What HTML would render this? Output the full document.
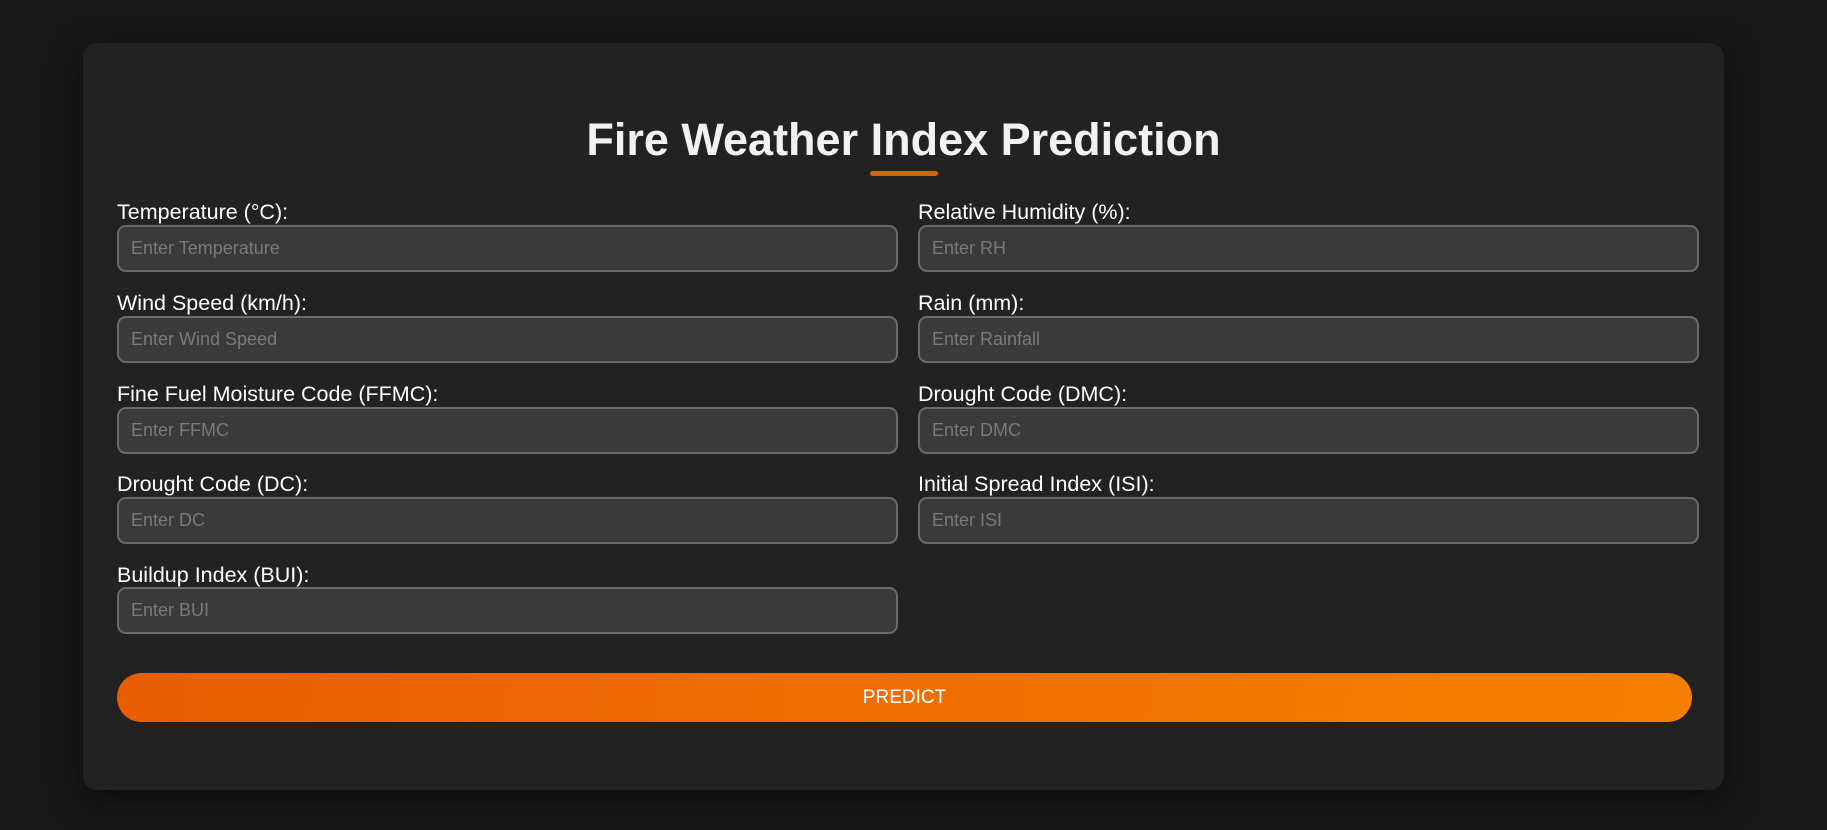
<!DOCTYPE html>
<html><head><meta charset="utf-8"><style>
body{margin:0;width:1827px;height:830px;background:#181818;font-family:"Liberation Sans",Arial,sans-serif;position:relative;overflow:hidden}
.card{position:absolute;left:83px;top:43px;width:1641px;height:747px;background:#222;border-radius:14px;box-shadow:0 10px 30px rgba(0,0,0,.5)}
h1{position:absolute;left:83px;width:1641px;top:113px;margin:0;text-align:center;color:#f2f2f2;font-size:45px;font-weight:bold;line-height:54px}
.ul{position:absolute;left:870px;top:171px;width:68px;height:5px;border-radius:3px;background:#e85d04}
.lab{position:absolute;color:#fff;font-size:21.5px;line-height:24px}
.in{position:absolute;box-sizing:border-box;width:781px;height:47px;background:#3a3a3a;border:2px solid #6b6b6b;border-radius:9px;color:#7a7a7a;font-size:18px;line-height:43px;padding-left:12px}
.btn{position:absolute;left:117px;top:673px;width:1575px;height:49px;border-radius:25px;background:linear-gradient(100deg,#e85d04,#f77f00);color:#fff;text-align:center;font-size:19px;line-height:49px}
</style></head><body>
<div class="card"></div>
<h1>Fire Weather Index Prediction</h1>
<div class="ul"></div>

<div class="lab" style="left:117px;top:200px">Temperature (°C):</div>
<div class="in" style="left:117px;top:225px">Enter Temperature</div>
<div class="lab" style="left:918px;top:200px">Relative Humidity (%):</div>
<div class="in" style="left:918px;top:225px">Enter RH</div>

<div class="lab" style="left:117px;top:291px">Wind Speed (km/h):</div>
<div class="in" style="left:117px;top:316px">Enter Wind Speed</div>
<div class="lab" style="left:918px;top:291px">Rain (mm):</div>
<div class="in" style="left:918px;top:316px">Enter Rainfall</div>

<div class="lab" style="left:117px;top:382px">Fine Fuel Moisture Code (FFMC):</div>
<div class="in" style="left:117px;top:407px">Enter FFMC</div>
<div class="lab" style="left:918px;top:382px">Drought Code (DMC):</div>
<div class="in" style="left:918px;top:407px">Enter DMC</div>

<div class="lab" style="left:117px;top:472px">Drought Code (DC):</div>
<div class="in" style="left:117px;top:497px">Enter DC</div>
<div class="lab" style="left:918px;top:472px">Initial Spread Index (ISI):</div>
<div class="in" style="left:918px;top:497px">Enter ISI</div>

<div class="lab" style="left:117px;top:563px">Buildup Index (BUI):</div>
<div class="in" style="left:117px;top:587px">Enter BUI</div>

<div class="btn">PREDICT</div>
</body></html>
